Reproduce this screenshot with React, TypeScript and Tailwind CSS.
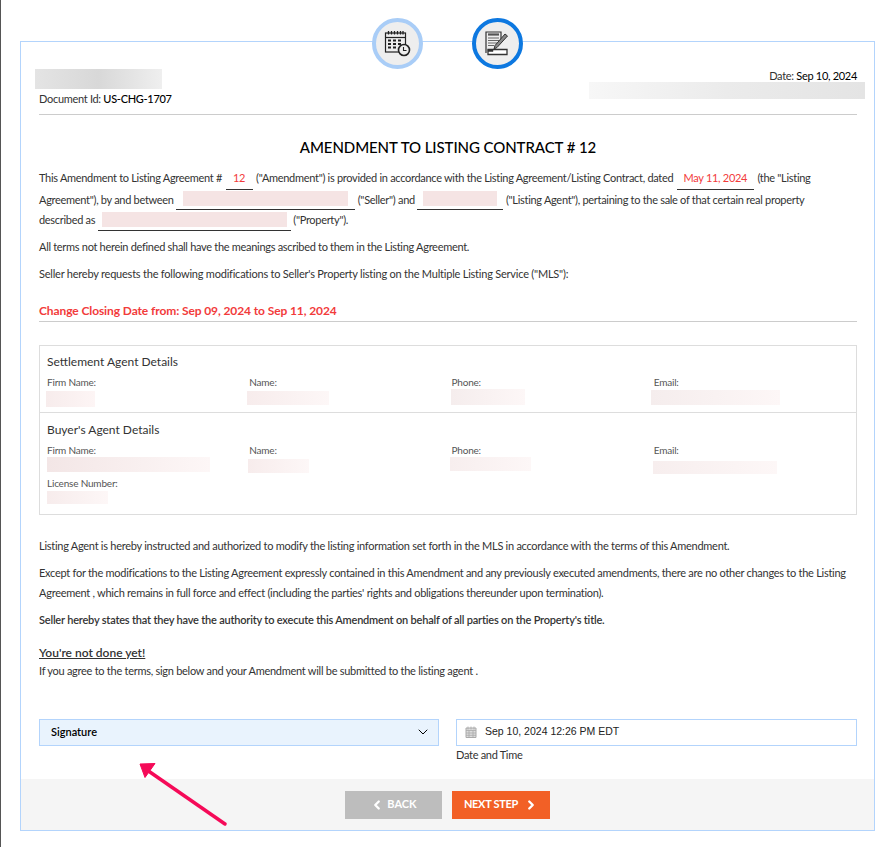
import { ChevronDown, ChevronLeft, ChevronRight } from "lucide-react";

function Blur({ className }: { className: string }) {
  return <span className={`block ${className}`} />;
}

function Filled({ className, children }: { className: string; children?: React.ReactNode }) {
  return (
    <span className={`inline-block border-b border-[#333] text-center text-[#f23b3b] ${className}`}>
      {children}
    </span>
  );
}

function CalendarIcon() {
  return (
    <svg width="27" height="27" viewBox="0 0 27 27" fill="none" stroke="#222">
      <rect x="1.500" y="3" width="20" height="19" strokeWidth="1.200" />
      <path d="M1.500 7.500h20" strokeWidth="1.200" />
      <path d="M4.500 1v3.500M7.500 1v3.500M10.500 1v3.500M13.500 1v3.500M16.500 1v3.500M19 1v3.500" strokeWidth="1.300" />
      <path d="M4 10.500h3M9 10.500h3M14 10.500h3M4 14h3M9 14h3M14 14h3M4 17.500h3M9 17.500h3" strokeWidth="1.800" />
      <circle cx="20" cy="20" r="5.500" fill="#eee" strokeWidth="1.600" />
      <path d="M19.500 17v3.500h3" strokeWidth="1.100" />
    </svg>
  );
}

function DocumentIcon() {
  return (
    <svg width="25" height="26" viewBox="0 0 25 26" fill="none" stroke="#333">
      <path d="M1 22V1h15v9" strokeWidth="1.200" />
      <path d="M3 3.500h11" strokeWidth="2.200" stroke="#555" />
      <path d="M3 7h11M3 9.500h11M3 12h9M3 14.500h6" strokeWidth="1" stroke="#666" />
      <path d="M9 18l1-3.500L20 3l2.500 2L12 16.500z" fill="#888" strokeWidth="1" />
      <path d="M3 18.500h19v5H3z" fill="#fff" strokeWidth="1.300" />
      <path d="M3 18.500h5v2H3z" fill="#333" strokeWidth="0.500" />
    </svg>
  );
}

function Agent({ label, blur }: { label: string; blur: string }) {
  return (
    <div>
      <p className="text-[10px] leading-[13px] tracking-[-0.2px] text-[#555]">{label}</p>
      <Blur className={blur} />
    </div>
  );
}

export default function App() {
  return (
    <div className="min-h-[847px] bg-white border-l border-[#555] pl-[19px] pr-[18px] pt-[41px] font-['Lato',sans-serif] text-[11px] tracking-[-0.3px] text-[#333]">
      <div className="relative w-[855px] h-[790px] border border-[#b3d4fc] flex flex-col">
        <div className="absolute -top-[24px] left-[351px] w-[51px] h-[51px] rounded-full border-[4px] border-[#a9cdf7] bg-[#eee] flex items-center justify-center">
          <CalendarIcon />
        </div>
        <div className="absolute -top-[24px] left-[451px] w-[51px] h-[51px] rounded-full border-[4px] border-[#0d78e0] bg-[#eee] flex items-center justify-center">
          <DocumentIcon />
        </div>

        <div className="flex-1 pl-[18px] pr-[17px] pt-[27px]">
          <div className="flex justify-between border-b border-[#ccc] h-[46px]">
            <div>
              <Blur className="-ml-[4px] w-[127px] h-[20px] bg-gradient-to-r from-[#e4e4e4] via-[#d8d8d8] to-[#efefef]" />
              <p className="mt-[3px] leading-[14px]">
                Document Id: <span className="text-black font-medium">US-CHG-1707</span>
              </p>
            </div>
            <div className="flex flex-col items-end">
              <p className="leading-[14px]">
                Date: <span className="text-black">Sep 10, 2024</span>
              </p>
              <Blur className="-mt-[1px] -mr-[8px] w-[276px] h-[17px] bg-gradient-to-r from-[#f7f7f7] via-[#ebebeb] to-[#e4e4e4]" />
            </div>
          </div>

          <h1 className="mt-[22px] text-center text-[15px] leading-[20px] tracking-[-0.08px] font-medium text-black">
            AMENDMENT TO LISTING CONTRACT # 12
          </h1>

          <div className="mt-[11px] leading-[20.5px]">
            <p>
              This Amendment to Listing Agreement # <Filled className="w-[27px] mx-[1px]">12</Filled> ("Amendment") is
              provided in accordance with the Listing Agreement/Listing Contract, dated{" "}
              <Filled className="w-[77px] mx-[1px]">May 11, 2024</Filled> (the "Listing Agreement"), by and between{" "}
              <Filled className="w-[179px] h-[20px] align-bottom">
                <Blur className="mx-[7px] mt-[1px] h-[15px] bg-[#f5e4e4]" />
              </Filled>{" "}
              ("Seller") and{" "}
              <Filled className="w-[86px] h-[20px] align-bottom">
                <Blur className="mx-[6px] mt-[1px] h-[15px] bg-[#f5e4e4]" />
              </Filled>{" "}
              ("Listing Agent"), pertaining to the sale of that certain real property
              <br />
              described as{" "}
              <Filled className="w-[193px] h-[20px] align-bottom">
                <Blur className="mx-[4px] mt-[1px] h-[15px] bg-[#f5e4e4]" />
              </Filled>{" "}
              ("Property").
            </p>
            <p className="mt-[6px]">All terms not herein defined shall have the meanings ascribed to them in the Listing Agreement.</p>
            <p className="mt-[7px] tracking-[-0.22px]">
              Seller hereby requests the following modifications to Seller's Property listing on the Multiple Listing
              Service ("MLS"):
            </p>
          </div>

          <h2 className="mt-[17px] pb-[1px] border-b border-[#ccc] text-[12px] leading-[18px] tracking-[-0.1px] font-bold text-[#f23b3b]">
            Change Closing Date from: Sep 09, 2024 to Sep 11, 2024
          </h2>

          <div className="mt-[23px] h-[170px] border border-[#ddd]">
            <div className="h-[67px] border-b border-[#ddd] pl-[7px] pt-[8px]">
              <h3 className="text-[12px] leading-[16px] tracking-normal">Settlement Agent Details</h3>
              <div className="mt-[6px] grid grid-cols-4">
                <Agent label="Firm Name:" blur="-ml-[1px] mt-[2px] w-[49px] h-[16px] bg-gradient-to-r from-[#f7ecec] to-[#fdf5f5]" />
                <Agent label="Name:" blur="-ml-[2px] mt-[2px] w-[82px] h-[14px] bg-gradient-to-r from-[#f7ecec] to-[#fdf7f7]" />
                <Agent label="Phone:" blur="-ml-[1px] w-[74px] h-[16px] bg-gradient-to-r from-[#f5eded] to-[#fdf7f7]" />
                <Agent label="Email:" blur="-ml-[3px] mt-[1px] w-[129px] h-[15px] bg-gradient-to-r from-[#f5eded] to-[#fdf7f7]" />
              </div>
            </div>
            <div className="pl-[7px] pt-[9px]">
              <h3 className="text-[12px] leading-[16px] tracking-normal">Buyer's Agent Details</h3>
              <div className="mt-[6px] grid grid-cols-4">
                <Agent label="Firm Name:" blur="w-[163px] h-[15px] bg-gradient-to-r from-[#f3e6e6] to-[#fdf7f7]" />
                <Agent label="Name:" blur="-ml-[1px] mt-[2px] w-[61px] h-[14px] bg-gradient-to-r from-[#f7ecec] to-[#fdf7f7]" />
                <Agent label="Phone:" blur="-ml-[2px] w-[81px] h-[14px] bg-gradient-to-r from-[#f7eeee] to-[#fdf7f7]" />
                <Agent label="Email:" blur="-ml-[1px] mt-[4px] w-[124px] h-[13px] bg-gradient-to-r from-[#f7eeee] to-[#fdf7f7]" />
              </div>
              <div className="mt-[3px]">
                <Agent label="License Number:" blur="mt-[1px] w-[61px] h-[13px] bg-gradient-to-r from-[#f7ecec] to-[#fdf7f7]" />
              </div>
            </div>
          </div>

          <div className="mt-[21px] leading-[20px] tracking-[-0.27px]">
            <p>
              Listing Agent is hereby instructed and authorized to modify the listing information set forth in the MLS
              in accordance with the terms of this Amendment.
            </p>
            <p className="mt-[7px]">
              Except for the modifications to the Listing Agreement expressly contained in this Amendment and any
              previously executed amendments, there are no other changes to the Listing Agreement , which remains in
              full force and effect (including the parties' rights and obligations thereunder upon termination).
            </p>
            <p className="mt-[7px] font-semibold tracking-[-0.2px]">
              Seller hereby states that they have the authority to execute this Amendment on behalf of all parties on
              the Property's title.
            </p>
            <p className="mt-[14px] text-[12px] leading-[18px] tracking-normal font-semibold underline">You're not done yet!</p>
            <p className="leading-[18px]">
              If you agree to the terms, sign below and your Amendment will be submitted to the listing agent .
            </p>
          </div>

          <div className="mt-[39px] flex gap-[17px]">
            <div className="w-[400px] h-[27px] border border-[#b3d4fc] bg-[#e9f3fd] pl-[11px] pr-[7px] flex items-center justify-between text-[11px] tracking-normal font-semibold text-black">
              Signature
              <ChevronDown className="w-[16px] h-[16px]" strokeWidth={1.500} />
            </div>
            <div className="flex-1">
              <div className="h-[27px] border border-[#b3d4fc] pl-[8px] flex items-center gap-[8px] font-['Liberation_Sans',sans-serif] text-[10.5px] tracking-normal text-[#222]">
                <svg width="12" height="12" viewBox="0 0 12 12" fill="none">
                  <path d="M1 2h10v9.500H1z" fill="#ddd" stroke="#aaa" />
                  <path d="M3 .5v3M6 .5v3M9 .5v3M1 4.500h10M4 4.500v7M8 4.500v7M1 7h10M1 9.300h10" stroke="#aaa" strokeWidth=".8" />
                </svg>
                Sep 10, 2024 12:26 PM EDT
              </div>
              <p className="mt-[1px] leading-[16px]">Date and Time</p>
            </div>
          </div>
        </div>

        <div className="h-[51px] bg-[#f5f5f5] flex items-center justify-center gap-[10px] tracking-normal">
          <button className="w-[97px] h-[28px] bg-[#bdbdbd] text-white text-[11px] font-bold flex items-center justify-center gap-[3px]">
            <ChevronLeft className="w-[14px] h-[14px]" strokeWidth={4} />
            BACK
          </button>
          <button className="w-[98px] h-[28px] bg-[#f26026] text-white text-[11px] tracking-[-0.3px] font-bold flex items-center justify-center gap-[6px]">
            NEXT STEP
            <ChevronRight className="w-[14px] h-[14px]" strokeWidth={4} />
          </button>
        </div>

        <svg className="absolute left-[116px] top-[720px]" width="92" height="66" viewBox="0 0 92 66" fill="none">
          <path d="M88 62L10 8" stroke="#f50a58" strokeWidth="3.500" strokeLinecap="round" />
          <path d="M3 2l15-0.500-10 14z" fill="#f50a58" stroke="#f50a58" strokeWidth="1" />
        </svg>
      </div>
    </div>
  );
}
